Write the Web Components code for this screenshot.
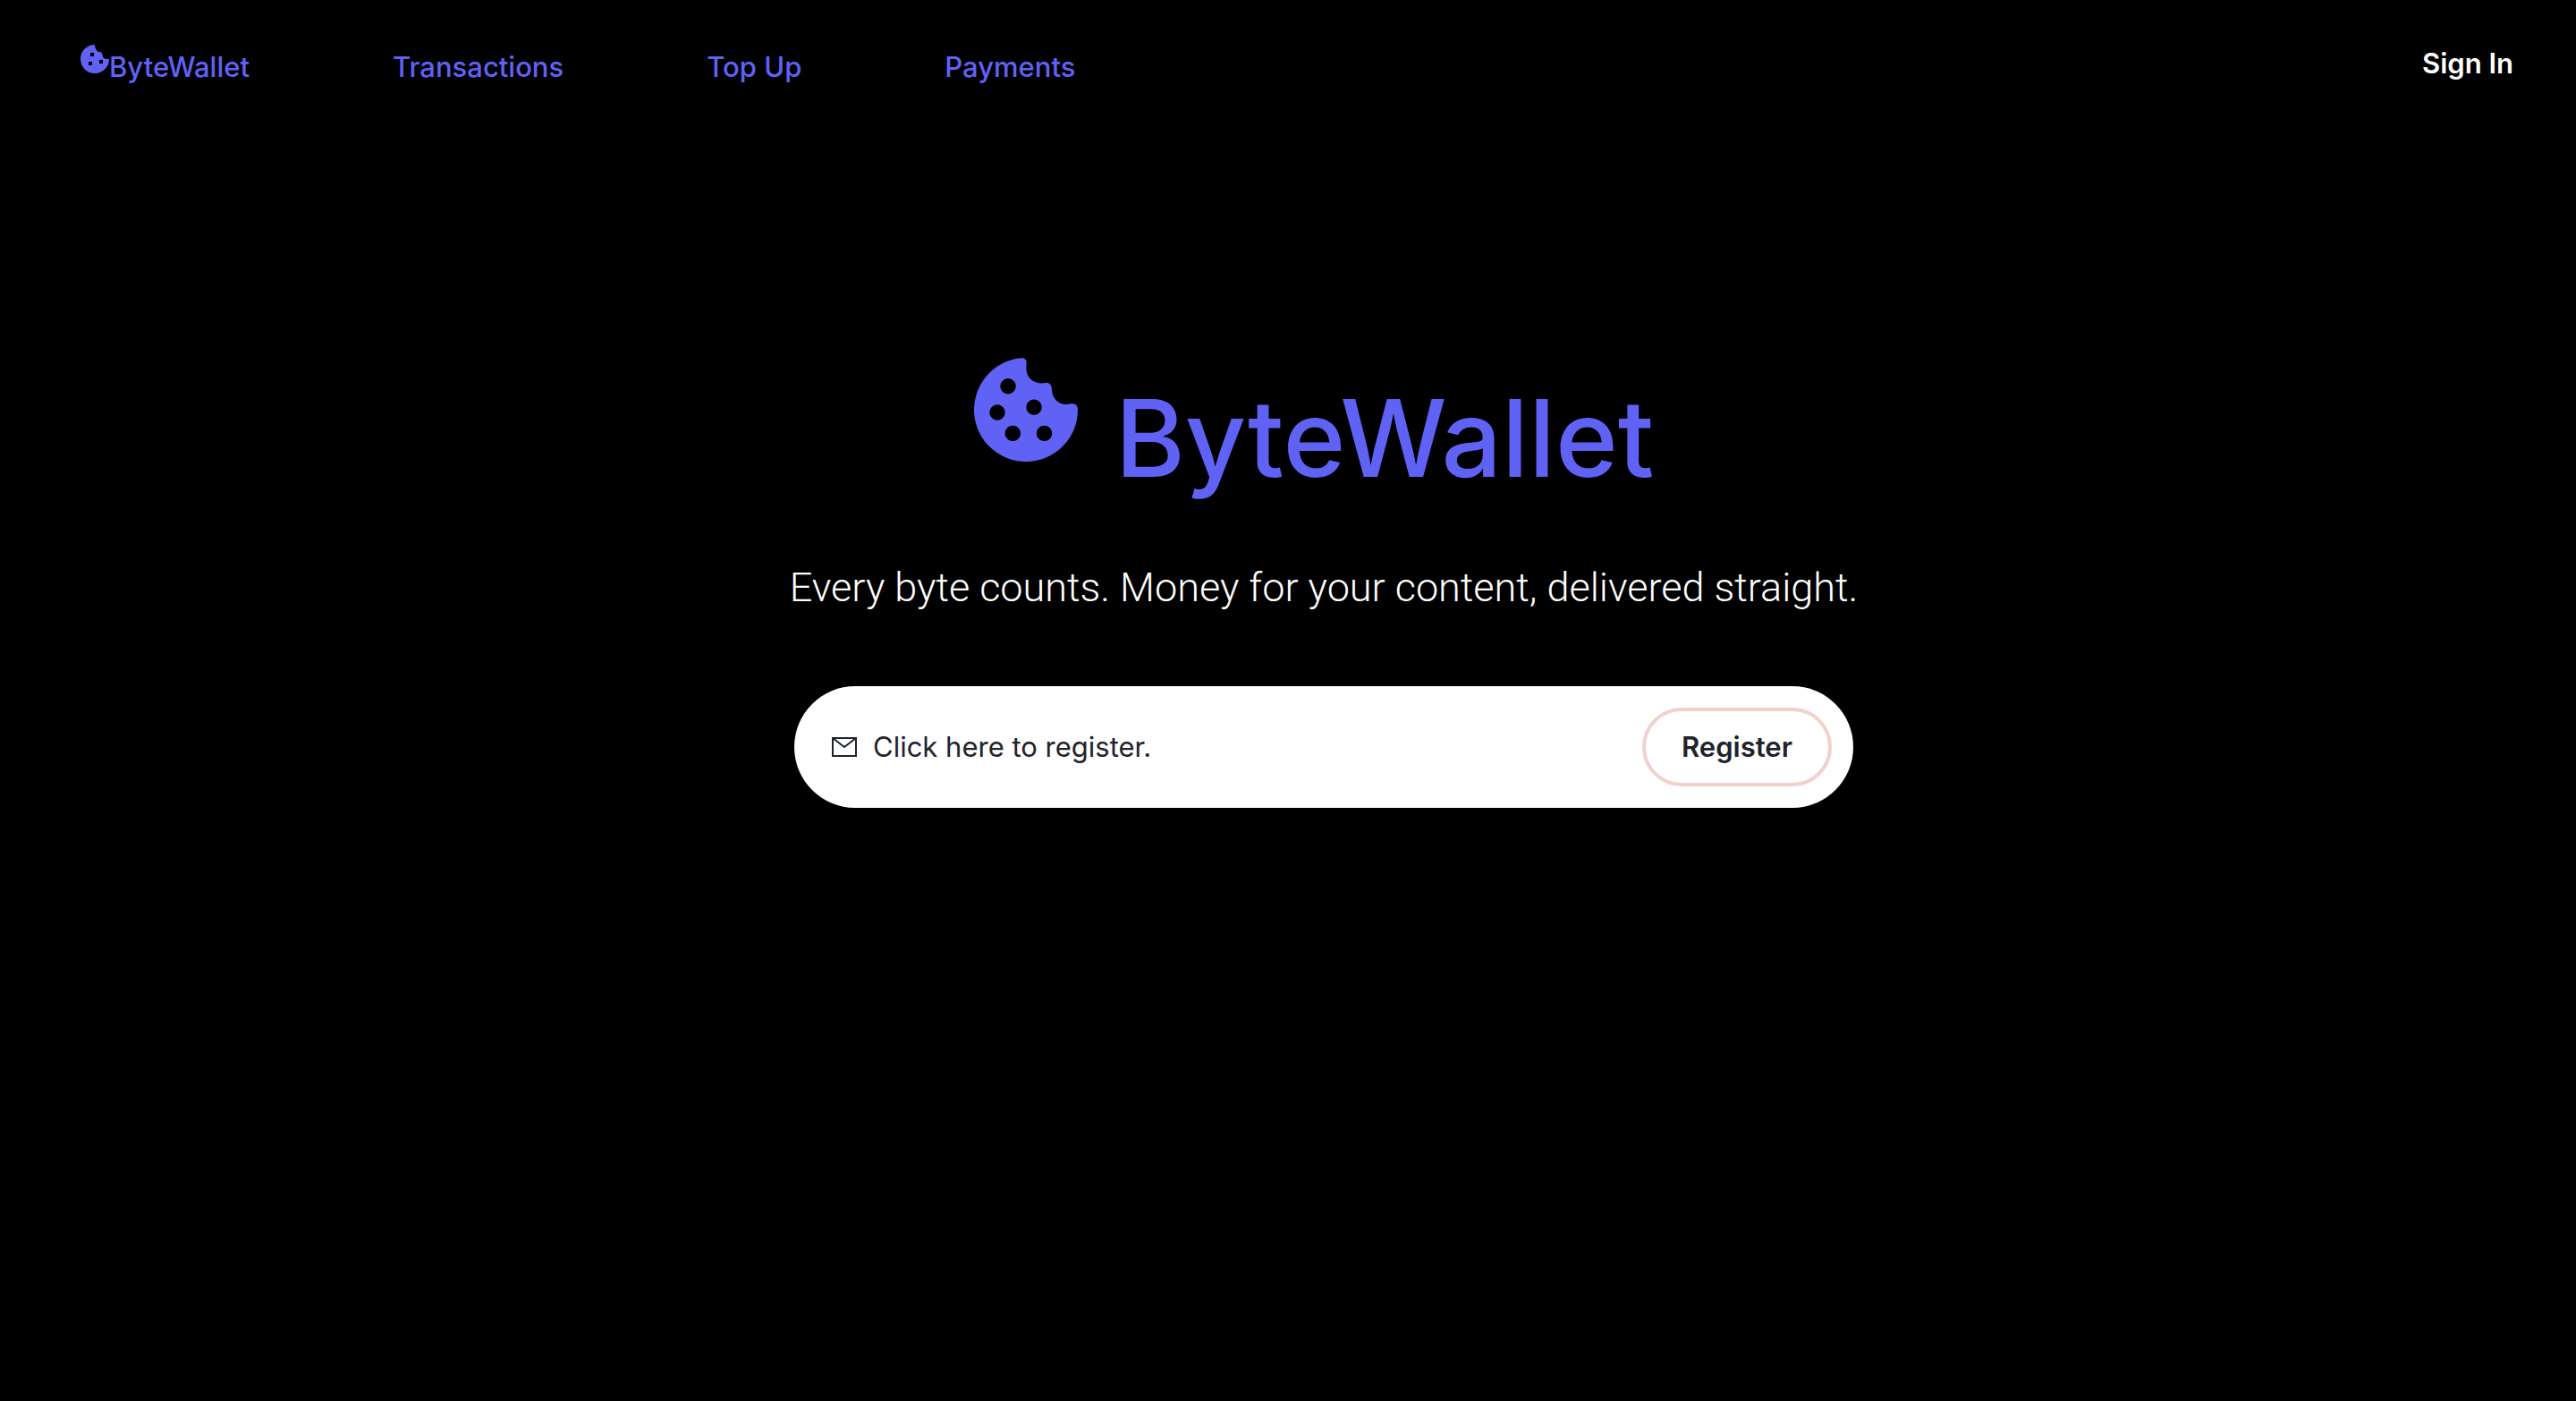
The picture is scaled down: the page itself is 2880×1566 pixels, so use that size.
<!DOCTYPE html>
<html lang="en">
<head>
<meta charset="utf-8">
<title>ByteWallet</title>
<style>
body { margin: 0; background: #000; font-family: Inter, sans-serif; }
</style>
</head>
<body>
<byte-page></byte-page>
<script>
const define = (name, html) => customElements.define(name, class extends HTMLElement {
  constructor() {
    super();
    this.attachShadow({ mode: 'open' }).innerHTML = html;
  }
});

define('cookie-icon', `
<style>
  :host { display: block; flex: none; }
  svg { display: block; width: 100%; height: 100%; }
</style>
<svg viewBox="0 0 116 116" aria-hidden="true">
  <path fill="currentColor" fill-rule="evenodd" d="M52 .3 C56 -.3 59 1.500 58.700 6 L58.300 11 C58 21 65 28.500 75 28.500 L80 27.900 C84 27.600 86.500 30 87 35 C87 45 94 52 103 52 L109 51.200 C113.500 50.800 116 53 116 58 A58 58 0 1 1 52 .3Z M38 23 a8.700 8.700 0 1 0 .01 0Z M26 52.300 a8.700 8.700 0 1 0 .01 0Z M67 46.500 a8.700 8.700 0 1 0 .01 0Z M43.300 75.700 a8.700 8.700 0 1 0 .01 0Z M78.500 75.700 a8.700 8.700 0 1 0 .01 0Z"/>
</svg>`);

define('cookie-mark', `
<style>
  :host { display: block; flex: none; width: 32px; height: 32px; }
  svg { display: block; }
</style>
<svg width="32" height="32" viewBox="0 0 32 32" aria-hidden="true">
  <path fill="currentColor" fill-rule="evenodd" d="M15.700 0 C16.500 3 17 7 20.500 8 C23.500 8 24.200 9 24.300 11 C24.500 14.500 27 16.500 32 16 A16 16 0 1 1 15.700 0Z M11 9h4v4h-4Z M9 19h4v4h-4Z M21 17h4v4h-4Z"/>
</svg>`);

define('mail-icon', `
<style>
  :host { display: block; flex: none; width: 28px; height: 22px; }
  svg { display: block; }
</style>
<svg width="28" height="22" viewBox="0 0 28 22" fill="none" stroke="currentColor" stroke-width="2" aria-hidden="true">
  <path d="M1 1H27V21H1Z M1 1L14 11L27 1"/>
</svg>`);

define('nav-link', `
<style>
  :host { display: block; }
  a { display: flex; color: inherit; text-decoration: none; white-space: nowrap; }
</style>
<a href="#"><slot name="icon"></slot><slot></slot></a>`);

define('site-header', `
<style>
  :host { display: flex; justify-content: space-between; align-items: flex-start;
    padding: 51px 70px 0 90px; font-size: 31px; line-height: 40px; font-weight: 500; }
  nav { display: flex; gap: 160px; color: #6062f6; padding-top: 4px; }
  cookie-mark { margin-top: -5px; }
  .sign-in { color: #fff; font-weight: 600; }
</style>
<nav>
  <nav-link><cookie-mark slot="icon"></cookie-mark>ByteWallet</nav-link>
  <nav-link>Transactions</nav-link>
  <nav-link>Top Up</nav-link>
  <nav-link>Payments</nav-link>
</nav>
<nav-link class="sign-in">Sign In</nav-link>`);

define('register-bar', `
<style>
  :host { display: flex; align-items: center; box-sizing: border-box; min-height: 136px;
    padding: 24px 24px 24px 42px; border-radius: 68px; background: #fff; color: #1f232c;
    font-size: 31px; line-height: 40px; }
  span { margin-left: 18px; }
  button { margin-left: auto; padding: 20px 40px; border: 4px solid #f0d1cc; border-radius: 44px;
    background: #fff; color: inherit; font: inherit; font-weight: 600; cursor: pointer; }
</style>
<mail-icon></mail-icon><span><slot></slot></span><button type="button">Register</button>`);

define('hero-section', `
<style>
  :host { display: flex; justify-content: center; padding: 305px 0 80px 80px; }
  .content { display: flex; flex-direction: column; width: 100%; max-width: 1184px; }
  h1 { display: flex; align-self: center; gap: 42px; margin: 0 22px 0 0; color: #6062f6;
    font-size: 119px; line-height: 180px; font-weight: 500; }
  cookie-icon { width: 116px; height: 116px; }
  p { align-self: center; margin: 45px 0 78px; color: #fff; font-family: Roboto, sans-serif;
    font-size: 45px; line-height: 64px; font-weight: 300; white-space: nowrap; }
</style>
<div class="content">
  <h1><cookie-icon></cookie-icon><span>ByteWallet</span></h1>
  <p>Every byte counts. Money for your content, delivered straight.</p>
  <register-bar>Click here to register.</register-bar>
</div>`);

define('byte-page', `
<style>:host { display: block; }</style>
<site-header></site-header>
<main><hero-section></hero-section></main>`);
</script>
</body>
</html>
